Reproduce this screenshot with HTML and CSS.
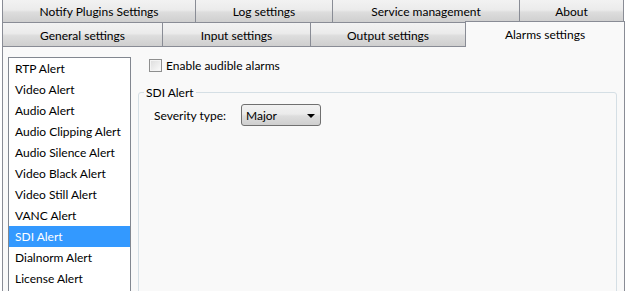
FILE: index.html
```html
<!DOCTYPE html>
<html>
<head>
<meta charset="utf-8">
<link rel="stylesheet" href="styles.css">
</head>
<body>
<div class="app">
  <div class="tabs">
    <div class="row row1">
      <div class="tab t-notify">Notify Plugins Settings</div>
      <div class="tab t-log">Log settings</div>
      <div class="tab t-service">Service management</div>
      <div class="tab t-about last">About</div>
    </div>
    <div class="row row2">
      <div class="tab t-general">General settings</div>
      <div class="tab t-input">Input settings</div>
      <div class="tab t-output">Output settings</div>
      <div class="tab t-alarms selected">Alarms settings</div>
    </div>
  </div>
  <div class="panel">
    <ul class="listbox">
      <li>RTP Alert</li>
      <li>Video Alert</li>
      <li>Audio Alert</li>
      <li>Audio Clipping Alert</li>
      <li>Audio Silence Alert</li>
      <li>Video Black Alert</li>
      <li>Video Still Alert</li>
      <li>VANC Alert</li>
      <li class="active">SDI Alert</li>
      <li>Dialnorm Alert</li>
      <li>License Alert</li>
    </ul>
    <div class="content">
      <label class="check-row"><span class="checkbox"></span><span class="check-label">Enable audible alarms</span></label>
      <fieldset class="group">
        <legend>SDI Alert</legend>
        <div class="field-row">
          <span class="field-label">Severity type:</span>
          <div class="combo"><span class="combo-value">Major</span><span class="combo-arrow"></span></div>
        </div>
      </fieldset>
    </div>
  </div>
</div>
</body>
</html>
```

FILE: styles.css
```css
html, body {
  margin: 0;
  padding: 0;
  background: #ffffff;
}
body {
  font-family: Lato, "Noto Sans", sans-serif;
  font-size: 12px;
  color: #000;
  width: 626px;
  height: 291px;
  overflow: hidden;
}
.app {
  display: flex;
  flex-direction: column;
  padding-left: 2px;
  width: 623px;
}
.tabs {
  display: flex;
  flex-direction: column;
}
.row {
  display: flex;
  align-items: flex-end;
}
.row1 {
  height: 23px;
}
.row2 {
  height: 23px;
}
.tab {
  box-sizing: border-box;
  height: 23px;
  border-top: 1px solid #898c95;
  border-left: 1px solid #898c95;
  background: linear-gradient(#f2f2f2 0%, #ebebeb 45%, #dddddd 55%, #cfcfcf 100%);
  display: flex;
  align-items: center;
  justify-content: center;
  line-height: 16px;
  white-space: nowrap;
}
.row1 .tab {
  border-bottom: 1px solid #898c95;
  height: 24px;
  margin-top: -1px;
  padding-top: 2px;
}
.tab.last {
  border-right: 1px solid #898c95;
}
.t-notify { width: 193px; }
.t-log { width: 137px; }
.t-service { width: 187px; }
.t-about { width: 105px; }
.t-general { width: 160px; }
.t-input { width: 148px; }
.t-output { width: 155px; }
.row2 .tab {
  height: 23px;
  border-top: none;
  padding-top: 2px;
}
.row2 .tab.selected {
  width: 160px;
  height: 26px;
  margin-bottom: -1px;
  border-top: 1px solid #898c95;
  border-right: 1px solid #898c95;
  background: #f9f9f9;
  position: relative;
  z-index: 2;
  padding-top: 1px;
  padding-bottom: 1px;
}
.panel {
  box-sizing: border-box;
  height: 260px;
  border: 1px solid #898c95;
  background: #f9f9f9;
  display: flex;
  padding: 10px 0 0 5px;
  position: relative;
  z-index: 1;
}
.listbox {
  list-style: none;
  margin: 0;
  padding: 0;
  width: 121px;
  flex: none;
  border: 1px solid #828790;
  background: #ffffff;
  height: 260px;
}
.listbox li {
  height: 21px;
  line-height: 22px;
  padding-left: 6px;
  white-space: nowrap;
}
.listbox li.active {
  background: #3399ff;
  color: #ffffff;
}
.content {
  flex: 1;
  margin-left: 7px;
  padding-right: 7px;
  display: flex;
  flex-direction: column;
}
.check-row {
  display: flex;
  align-items: center;
  height: 17px;
  padding-left: 11px;
}
.checkbox {
  box-sizing: border-box;
  width: 13px;
  height: 13px;
  border: 1px solid #8e8f8f;
  background: linear-gradient(135deg, #dcdcdc, #fbfbfb);
  box-shadow: inset 0 0 0 1px #f4f4f4;
  margin-right: 4px;
}
.group {
  margin: 10px 0 0 0;
  padding: 3px 0 0 5px;
  border: 1px solid #d5dfe5;
  border-radius: 3px;
  height: 220px;
  box-sizing: border-box;
  min-width: 0;
}
.group legend {
  padding: 0 2px;
  line-height: 17px;
}
.field-row {
  display: flex;
  align-items: center;
  margin-left: 10px;
}
.field-label {
  width: 87px;
}
.combo {
  box-sizing: border-box;
  width: 80px;
  height: 22px;
  border: 1px solid #707070;
  border-radius: 3px;
  background: linear-gradient(#f2f2f2 0%, #ebebeb 45%, #dddddd 55%, #cfcfcf 100%);
  display: flex;
  align-items: center;
  justify-content: space-between;
  padding: 1px 5px 0 4px;
}
.combo-arrow {
  width: 0;
  height: 0;
  border-left: 4px solid transparent;
  border-right: 4px solid transparent;
  border-top: 4px solid #000;
}
```
